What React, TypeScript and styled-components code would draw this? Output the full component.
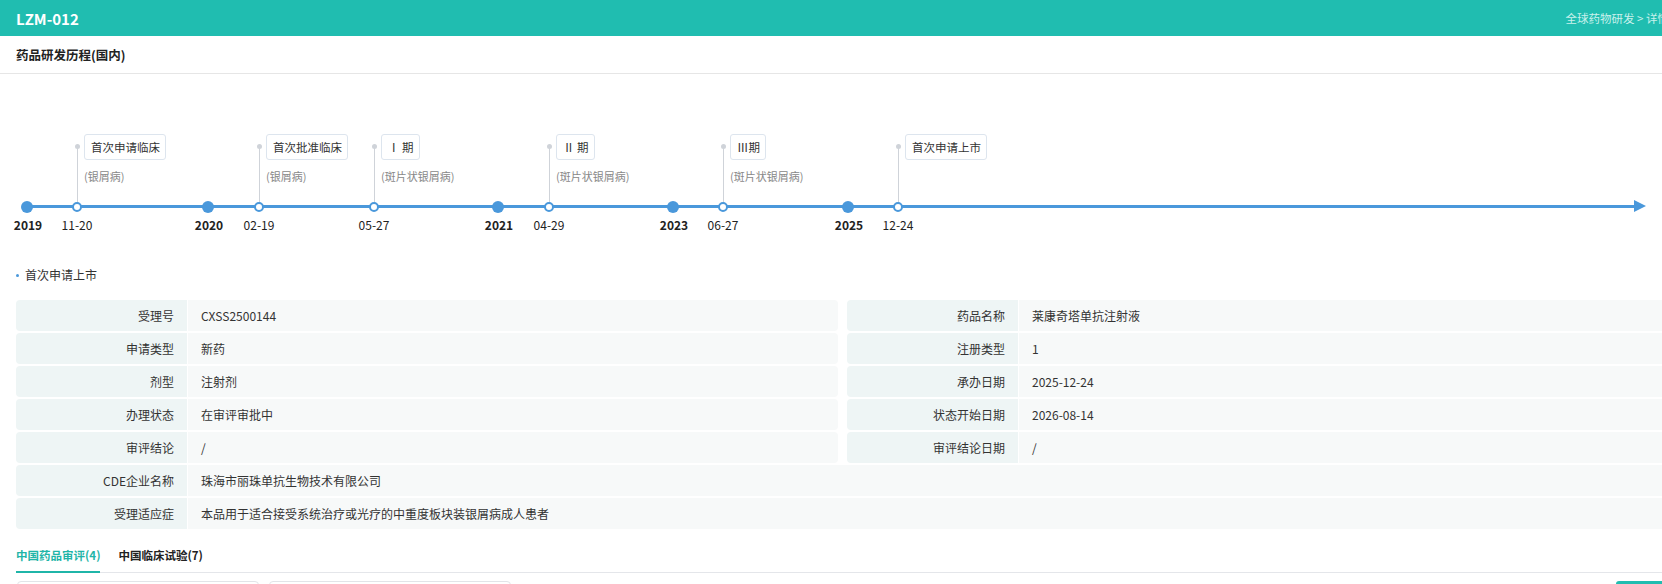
import React from 'react';
import styled, { createGlobalStyle } from 'styled-components';

const GlobalStyle = createGlobalStyle`
  html, body {
    margin: 0;
    padding: 0;
    background: #ffffff;
    overflow: hidden;
  }
  body {
    font-family: "Noto Sans CJK SC", "Noto Sans", sans-serif;
    color: #333333;
  }
`;

type YearMark = { x: number; year: string };
type EventMark = { x: number; date: string; title: string; sub?: string };

const years: YearMark[] = [
  { x: 27, year: '2019' },
  { x: 208, year: '2020' },
  { x: 498, year: '2021' },
  { x: 673, year: '2023' },
  { x: 848, year: '2025' },
];

const events: EventMark[] = [
  { x: 77, date: '11-20', title: '首次申请临床', sub: '(银屑病)' },
  { x: 259, date: '02-19', title: '首次批准临床', sub: '(银屑病)' },
  { x: 374, date: '05-27', title: 'Ⅰ 期', sub: '(斑片状银屑病)' },
  { x: 549, date: '04-29', title: 'Ⅱ 期', sub: '(斑片状银屑病)' },
  { x: 723, date: '06-27', title: 'Ⅲ期', sub: '(斑片状银屑病)' },
  { x: 898, date: '12-24', title: '首次申请上市' },
];

const leftFields = [
  ['受理号', 'CXSS2500144'],
  ['申请类型', '新药'],
  ['剂型', '注射剂'],
  ['办理状态', '在审评审批中'],
  ['审评结论', '/'],
];

const rightFields = [
  ['药品名称', '莱康奇塔单抗注射液'],
  ['注册类型', '1'],
  ['承办日期', '2025-12-24'],
  ['状态开始日期', '2026-08-14'],
  ['审评结论日期', '/'],
];

const wideFields = [
  ['CDE企业名称', '珠海市丽珠单抗生物技术有限公司'],
  ['受理适应症', '本品用于适合接受系统治疗或光疗的中重度板块装银屑病成人患者'],
];

const App = () => {
  const rows = leftFields.map((l, i) => [l, rightFields[i]]);
  return (
    <Page>
      <GlobalStyle />
      <Header>
        <Title>LZM-012</Title>
        <Crumbs>全球药物研发 &gt; 详情</Crumbs>
      </Header>
      <SectionHead>药品研发历程(国内)</SectionHead>
      <Timeline>
        <Axis />
        <ArrowHead />
        {events.map((e) => (
          <React.Fragment key={e.date}>
            <Connector style={{ left: e.x }} />
            <EventBox style={{ left: e.x + 7 }}>{e.title}</EventBox>
            {e.sub && <EventSub style={{ left: e.x + 7 }}>{e.sub}</EventSub>}
            <Dot $hollow style={{ left: e.x }} />
            <AxisLabel style={{ left: e.x }}>{e.date}</AxisLabel>
          </React.Fragment>
        ))}
        {years.map((y) => (
          <React.Fragment key={y.year}>
            <Dot style={{ left: y.x }} />
            <AxisLabel $bold style={{ left: y.x + 1 }}>{y.year}</AxisLabel>
          </React.Fragment>
        ))}
      </Timeline>
      <SubTitle>
        <Bullet />
        首次申请上市
      </SubTitle>
      <FieldGrid>
        {rows.map(([l, r]) => (
          <React.Fragment key={l[0]}>
            <Field>
              <FieldLabel>{l[0]}</FieldLabel>
              <FieldValue>{l[1]}</FieldValue>
            </Field>
            <Field>
              <FieldLabel>{r[0]}</FieldLabel>
              <FieldValue>{r[1]}</FieldValue>
            </Field>
          </React.Fragment>
        ))}
        {wideFields.map(([k, v]) => (
          <Field key={k} $wide>
            <FieldLabel>{k}</FieldLabel>
            <FieldValue>{v}</FieldValue>
          </Field>
        ))}
      </FieldGrid>
      <Tabs>
        <Tab $active>中国药品审评(4)</Tab>
        <Tab>中国临床试验(7)</Tab>
      </Tabs>
      <CardRow>
        <Card />
        <Card />
        <Spacer />
        <ActionButton />
      </CardRow>
    </Page>
  );
};

const Page = styled.div`
  width: 1685px;
`;

const Header = styled.div`
  height: 36px;
  background: #20bdb0;
  display: flex;
  align-items: center;
  justify-content: space-between;
  padding: 0 16px;
`;

const Title = styled.div`
  color: #ffffff;
  font-size: 15px;
  font-weight: 700;
`;

const Crumbs = styled.div`
  color: #c9f1ec;
  font-size: 11.5px;
`;

const SectionHead = styled.div`
  height: 37px;
  display: flex;
  align-items: center;
  padding: 0 16px;
  border-bottom: 1px solid #e6e6e6;
  font-size: 12.5px;
  font-weight: 700;
  color: #222222;
  border-radius: 4px 4px 0 0;
`;

const Timeline = styled.div`
  position: relative;
  height: 170px;
`;

const Axis = styled.div`
  position: absolute;
  left: 27px;
  top: 131px;
  width: 1608px;
  height: 3px;
  background: #4a98db;
`;

const ArrowHead = styled.div`
  position: absolute;
  left: 1634px;
  top: 126px;
  width: 0;
  height: 0;
  border-top: 6px solid transparent;
  border-bottom: 6px solid transparent;
  border-left: 12px solid #4a98db;
`;

const Connector = styled.div`
  position: absolute;
  top: 72px;
  height: 60px;
  width: 1px;
  margin-left: -0.5px;
  background: #cfd3d9;

  &::before {
    content: '';
    position: absolute;
    top: -2px;
    left: -2px;
    width: 5px;
    height: 5px;
    border-radius: 50%;
    background: #cfd3d9;
  }
`;

const EventBox = styled.div`
  position: absolute;
  top: 60px;
  height: 24px;
  line-height: 24px;
  padding: 0 5px 0 6px;
  border: 1px solid #dde5ee;
  border-radius: 3px;
  font-size: 11.5px;
  color: #333333;
  white-space: nowrap;
  background: #ffffff;
`;

const EventSub = styled.div`
  position: absolute;
  top: 94px;
  line-height: 16px;
  font-size: 11px;
  color: #888888;
  white-space: nowrap;
`;

const Dot = styled.div<{ $hollow?: boolean }>`
  position: absolute;
  top: ${(p) => (p.$hollow ? '128px' : '127px')};
  width: ${(p) => (p.$hollow ? '6px' : '12px')};
  height: ${(p) => (p.$hollow ? '6px' : '12px')};
  margin-left: ${(p) => (p.$hollow ? '-5px' : '-6px')};
  border-radius: 50%;
  background: ${(p) => (p.$hollow ? '#ffffff' : '#4a98db')};
  border: ${(p) => (p.$hollow ? '2px solid #4a98db' : 'none')};
`;

const AxisLabel = styled.div<{ $bold?: boolean }>`
  position: absolute;
  top: 143px;
  line-height: 16px;
  transform: translateX(-50%);
  font-size: 12px;
  font-weight: ${(p) => (p.$bold ? 700 : 400)};
  color: #222222;
  white-space: nowrap;
`;

const SubTitle = styled.div`
  display: flex;
  align-items: center;
  gap: 6px;
  padding: 21px 16px 0 16px;
  line-height: 20px;
  font-size: 12px;
  color: #333333;
`;

const Bullet = styled.span`
  width: 3px;
  height: 3px;
  border-radius: 50%;
  background: #4a98db;
`;

const FieldGrid = styled.div`
  display: grid;
  grid-template-columns: 1fr 1fr;
  column-gap: 9px;
  row-gap: 2px;
  margin: 15px 16px 0 16px;
`;

const Field = styled.div<{ $wide?: boolean }>`
  display: flex;
  height: 31px;
  grid-column: ${(p) => (p.$wide ? '1 / span 2' : 'auto')};
  border-radius: 4px;
  overflow: hidden;
  font-size: 12px;
`;

const FieldLabel = styled.div`
  width: 171px;
  flex: none;
  background: #eef5f5;
  display: flex;
  align-items: center;
  justify-content: flex-end;
  padding-right: 13px;
  box-sizing: border-box;
  color: #333333;
  margin-right: 1px;
`;

const FieldValue = styled.div`
  flex: 1;
  background: #f7f9f9;
  display: flex;
  align-items: center;
  padding-left: 13px;
  color: #333333;
  white-space: nowrap;
`;

const Tabs = styled.div`
  display: flex;
  gap: 18px;
  margin: 11px 16px 0 16px;
  border-bottom: 1px solid #e4e6ea;
`;

const Tab = styled.div<{ $active?: boolean }>`
  height: 31px;
  line-height: 31px;
  font-size: 11.5px;
  font-weight: 700;
  color: ${(p) => (p.$active ? '#1fb5a8' : '#222222')};
  border-bottom: 2px solid ${(p) => (p.$active ? '#1fb5a8' : 'transparent')};
  margin-bottom: -1px;
`;

const CardRow = styled.div`
  display: flex;
  gap: 10px;
  margin: 8px 16px 0 17px;
`;

const Card = styled.div`
  width: 240px;
  height: 40px;
  border: 1px solid #e2e4e8;
  border-radius: 4px;
`;

const Spacer = styled.div`
  flex: 1;
`;

const ActionButton = styled.div`
  width: 53px;
  height: 28px;
  border-radius: 3px;
  background: #20bdb0;
`;

export default App;
